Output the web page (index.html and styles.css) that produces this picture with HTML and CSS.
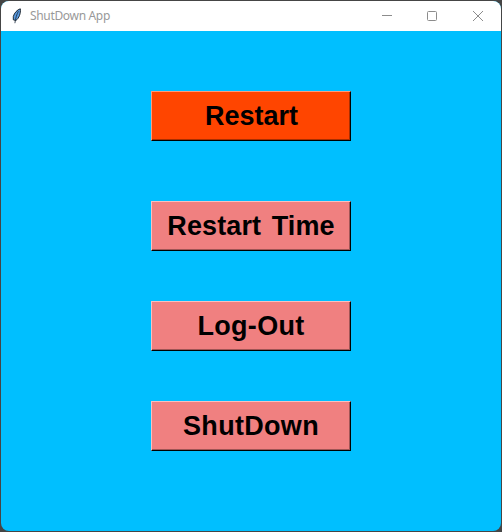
FILE: index.html
```html
<!DOCTYPE html>
<html lang="en">
<head>
<meta charset="utf-8">
<title>ShutDown App</title>
<link rel="stylesheet" href="styles.css">
</head>
<body>
<div class="window">
  <header class="titlebar">
    <svg class="feather" width="16" height="16" viewBox="0 0 16 16">
      <path d="M11.3 .8C8.4 1.5 5.2 5 4.3 8.5L4.3 11.8 6.8 12.5C10 10.5 12 5 11.3.8Z" fill="#5b9be0" stroke="#111820" stroke-width=".9"/>
      <path d="M9.4 3.2C7.8 6.5 6.6 9.5 5.9 15.2" fill="none" stroke="#142438" stroke-width=".8"/>
    </svg>
    <span class="title">ShutDown App</span>
    <div class="controls">
      <svg width="12" height="12" viewBox="0 0 12 12"><path d="M1 5.5h10"/></svg>
      <svg width="12" height="12" viewBox="0 0 12 12"><rect x="1.5" y="1.5" width="9" height="9" rx="1"/></svg>
      <svg class="close" width="12" height="12" viewBox="0 0 12 12"><path d="M1 1l10 10M11 1L1 11"/></svg>
    </div>
  </header>
  <main class="content">
    <button class="action restart">Restart</button>
    <button class="action timed">Restart Time</button>
    <button class="action">Log-Out</button>
    <button class="action">ShutDown</button>
  </main>
</div>
</body>
</html>
```
FILE: styles.css
```css
* { box-sizing: border-box; }
body {
  margin: 0;
  height: 532px;
  padding: 1px;
  background: #454545;
  overflow: hidden;
}
.window {
  width: 500px;
  height: 530px;
  border-radius: 8px;
  overflow: hidden;
  background: #00bfff;
}
.titlebar {
  height: 30px;
  display: flex;
  align-items: center;
  padding: 0 17px 0 8px;
  background: #fff;
}
.feather { flex: none; }
.title {
  margin-left: 5px;
  font: 12px/16px "Noto Sans", sans-serif;
  letter-spacing: -0.33px;
  color: #999;
}
.controls {
  display: flex;
  gap: 33px;
  margin-left: auto;
}
.controls svg {
  fill: none;
  stroke: #8c8c8c;
  stroke-width: 1;
}
.controls .close { margin-left: 1px; }
.content {
  display: flex;
  flex-direction: column;
  align-items: center;
  padding-top: 60px;
}
.action {
  width: 200px;
  height: 50px;
  margin: 0 0 50px;
  padding: 0;
  border: 1px solid;
  border-color: #f8c0c0 #000 #000 #f8c0c0;
  border-radius: 0;
  box-shadow: inset -1px -1px #a05555;
  background: #f08080;
  color: #000;
  font: bold 27px/48px "Liberation Sans", Arial, sans-serif;
  letter-spacing: 0.3px;
}
.restart {
  margin-bottom: 60px;
  border-color: #ff9b78 #000 #000 #ff9b78;
  box-shadow: inset -1px -1px #aa2e00;
  background: #ff4500;
  letter-spacing: 0;
  padding-left: 1px;
}
.timed {
  letter-spacing: 0.1px;
  word-spacing: 3px;
}
```
